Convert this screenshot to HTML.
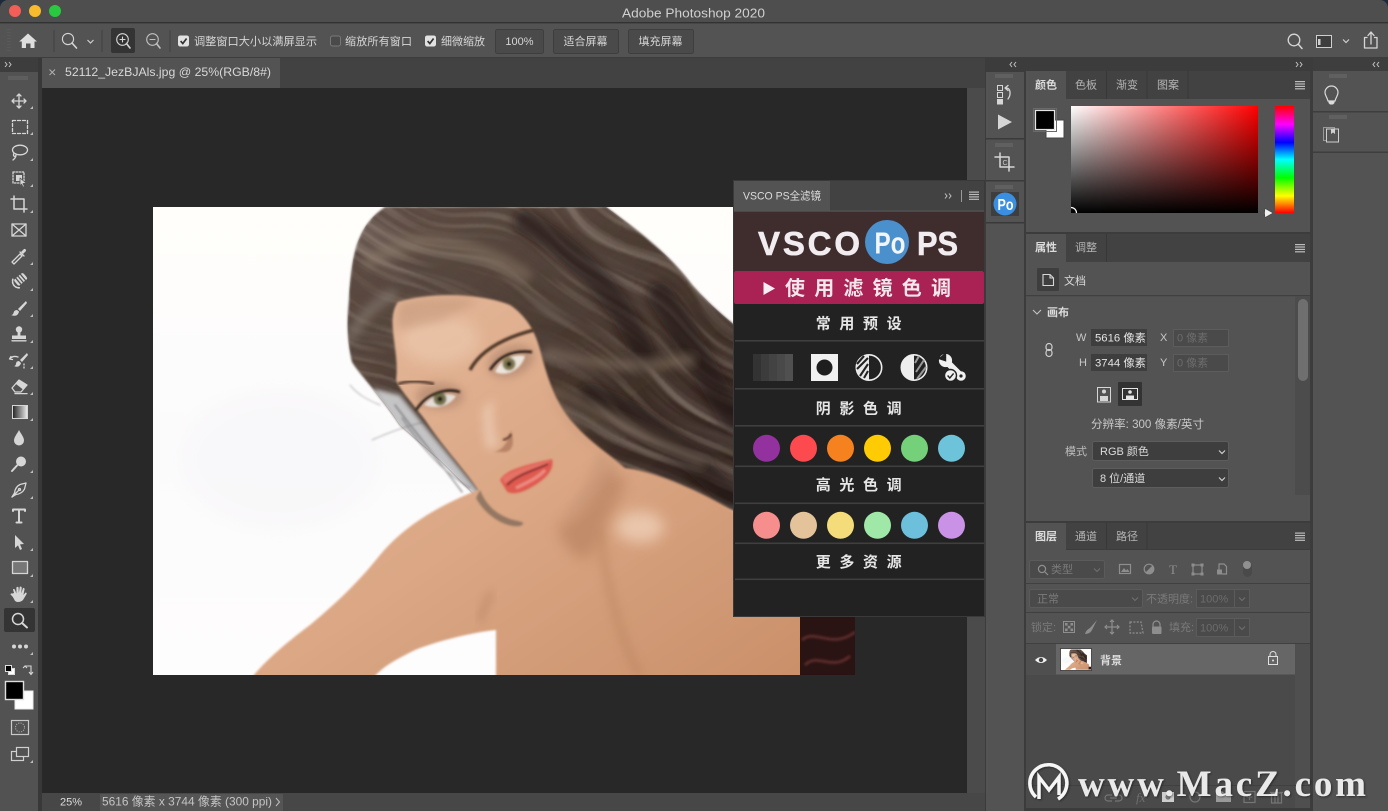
<!DOCTYPE html>
<html lang="zh"><head><meta charset="utf-8"><title>Adobe Photoshop 2020</title>
<style>
html,body{margin:0;padding:0;background:#2b2b2b;width:1388px;height:811px;overflow:hidden}
#w{position:relative;width:1388px;height:811px;overflow:hidden}
svg{display:block;position:absolute;left:0;top:0;overflow:hidden}
text{font-family:"Liberation Sans","Noto Sans CJK SC",sans-serif;fill:#d6d6d6;font-size:11px}
.t{fill:#dcdcdc}.d{fill:#b4b4b4}.dim{fill:#7a7a7a}.dd{fill:#6c6c6c}
.i{fill:none;stroke:#d6d6d6;stroke-width:1.3;stroke-linecap:round;stroke-linejoin:round}
.f{fill:#d6d6d6;stroke:none}
.g{fill:none;stroke:#8e8e8e;stroke-width:1.2}
.gf{fill:#8e8e8e}
.vl{fill:#e6e6e6;font-size:15px;font-weight:700;letter-spacing:8.6px;text-anchor:middle}
</style></head><body><div id="w">
<svg width="1388" height="811" viewBox="0 0 1388 811" xmlns="http://www.w3.org/2000/svg">
<defs>
<linearGradient id="hg" x1="0" y1="0" x2="1" y2="0"><stop offset="0" stop-color="#fff"/><stop offset="1" stop-color="#f00"/></linearGradient>
<linearGradient id="vg" x1="0" y1="0" x2="0" y2="1"><stop offset="0" stop-color="#000" stop-opacity="0"/><stop offset="1" stop-color="#000"/></linearGradient>
<linearGradient id="hue" x1="0" y1="0" x2="0" y2="1"><stop offset="0" stop-color="#f00"/><stop offset=".17" stop-color="#f0f"/><stop offset=".34" stop-color="#00f"/><stop offset=".5" stop-color="#0ff"/><stop offset=".67" stop-color="#0f0"/><stop offset=".84" stop-color="#ff0"/><stop offset="1" stop-color="#f00"/></linearGradient>
<linearGradient id="gr" x1="0" y1="0" x2="1" y2="0"><stop offset="0" stop-color="#222"/><stop offset="1" stop-color="#eee"/></linearGradient>
<linearGradient id="bg1" x1="0" y1="0" x2="0" y2="1"><stop offset="0" stop-color="#fffefb"/><stop offset=".5" stop-color="#fcfbfc"/><stop offset="1" stop-color="#fefdfd"/></linearGradient>
<linearGradient id="skin" x1="0" y1="0" x2="1" y2="1"><stop offset="0" stop-color="#e6bb9e"/><stop offset=".5" stop-color="#dba785"/><stop offset="1" stop-color="#c98f69"/></linearGradient>
<linearGradient id="hair" x1="0" y1="0" x2="1" y2="1"><stop offset="0" stop-color="#64534a"/><stop offset=".45" stop-color="#4a3a30"/><stop offset="1" stop-color="#2a1d19"/></linearGradient>
<filter id="b1" x="-20%" y="-20%" width="140%" height="140%"><feGaussianBlur stdDeviation="1"/></filter>
<filter id="b2" x="-30%" y="-30%" width="160%" height="160%"><feGaussianBlur stdDeviation="2.5"/></filter>
<filter id="b4" x="-40%" y="-40%" width="180%" height="180%"><feGaussianBlur stdDeviation="4.5"/></filter>
<filter id="b6" x="-50%" y="-50%" width="200%" height="200%"><feGaussianBlur stdDeviation="7"/></filter>
<filter id="strD" x="0" y="0" width="100%" height="100%"><feTurbulence type="fractalNoise" baseFrequency="0.006 0.07" numOctaves="3" seed="4" result="n"/><feColorMatrix in="n" values="0 0 0 0 .09  0 0 0 0 .06  0 0 0 0 .05  2.4 0 0 0 -.9" result="c"/><feTurbulence type="fractalNoise" baseFrequency="0.008" numOctaves="1" seed="7" result="w"/><feDisplacementMap in="c" in2="w" scale="90" xChannelSelector="R" yChannelSelector="G"/><feGaussianBlur stdDeviation=".8"/></filter>
<filter id="strL" x="0" y="0" width="100%" height="100%"><feTurbulence type="fractalNoise" baseFrequency="0.005 0.09" numOctaves="3" seed="11" result="n"/><feColorMatrix in="n" values="0 0 0 0 .58  0 0 0 0 .5  0 0 0 0 .42  2.4 0 0 0 -1.1" result="c"/><feTurbulence type="fractalNoise" baseFrequency="0.008" numOctaves="1" seed="7" result="w"/><feDisplacementMap in="c" in2="w" scale="90" xChannelSelector="R" yChannelSelector="G"/><feGaussianBlur stdDeviation=".8"/></filter>
<filter id="ws" x="-5%" y="-20%" width="110%" height="150%"><feDropShadow dx="1" dy="1" stdDeviation="1" flood-color="#000" flood-opacity=".45"/></filter>
<clipPath id="pc"><rect x="153" y="207" width="702" height="468"/></clipPath>
<clipPath id="hc"><path d="M385,207 L606,207 C640,232 670,255 692,285 C712,308 740,330 760,345 L760,520 L640,480 L600,500 L480,500 L440,460 L400,425 C380,395 360,375 352,362 C347,340 347,320 349,300 C350,280 352,262 356,248 C362,228 372,216 385,207 Z"/></clipPath>
<clipPath id="fieldc"><rect x="1071" y="106" width="187" height="107"/></clipPath>
<g id="menu"><rect x="-5" y="-4" width="10" height="1.2" fill="#bdbdbd"/><rect x="-5" y="-1.6" width="10" height="1.2" fill="#bdbdbd"/><rect x="-5" y=".8" width="10" height="1.2" fill="#bdbdbd"/><rect x="-5" y="3.2" width="10" height="1.2" fill="#bdbdbd"/></g>
<g id="cvl"><path d="M2,-2.5 L0,0 L2,2.5 M6,-2.5 L4,0 L6,2.5" fill="none" stroke="#c2c2c2" stroke-width="1"/></g>
<g id="cvr"><path d="M0,-2.5 L2,0 L0,2.5 M4,-2.5 L6,0 L4,2.5" fill="none" stroke="#c2c2c2" stroke-width="1"/></g>
<g id="chk"><rect x="0" y="0" width="11" height="11" rx="2.2" fill="#e2e2e2"/><path d="M2.6,5.6 L4.8,8 L8.6,3" fill="none" stroke="#333" stroke-width="1.7"/></g>
<g id="sel"><path d="M-3,-1.5 L0,1.5 L3,-1.5" fill="none" stroke="#cfcfcf" stroke-width="1.2"/></g>
<g id="selg"><path d="M-3,-1.5 L0,1.5 L3,-1.5" fill="none" stroke="#6f6f6f" stroke-width="1.1"/></g>
<g id="grip"><path d="M-8,0 V4 M-6,0 V4 M-4,0 V4 M-2,0 V4 M0,0 V4 M2,0 V4 M4,0 V4 M6,0 V4 M8,0 V4" stroke="#6c6c6c" stroke-width="1"/></g>
<g id="photo">
  <rect x="153" y="207" width="702" height="468" fill="url(#bg1)"/>
  <ellipse cx="280" cy="460" rx="100" ry="70" fill="#eeecf2" opacity=".22" filter="url(#b6)"/>
  <!-- hair mass -->
  <path d="M385,207 L606,207 C640,232 670,255 692,285 C712,308 740,330 760,345 L760,520 L640,480 L600,500 L480,500 L440,460 L400,425 C380,395 360,375 352,362 C347,340 347,320 349,300 C350,280 352,262 356,248 C362,228 372,216 385,207 Z" fill="url(#hair)" filter="url(#b1)"/>
  <g clip-path="url(#hc)">
    <rect x="300" y="150" width="560" height="450" transform="rotate(28 580 375)" filter="url(#strD)" opacity=".85"/>
    <rect x="300" y="150" width="560" height="450" transform="rotate(30 580 375)" filter="url(#strL)" opacity=".38"/>
    <g fill="none" stroke-linecap="round" filter="url(#b4)">
      <path d="M525,222 C575,250 625,300 645,360" stroke="#1d1210" stroke-width="24" opacity=".6"/>
      <path d="M660,295 C690,340 715,390 735,420" stroke="#1f1512" stroke-width="26" opacity=".6"/>
      <path d="M590,395 C640,410 680,450 730,495" stroke="#221612" stroke-width="24" opacity=".55"/>
      <path d="M370,262 C410,232 470,238 525,275" stroke="#8b7a68" stroke-width="14" opacity=".5"/>
      <path d="M548,352 C590,362 625,372 690,360" stroke="#8e7c6b" stroke-width="9" opacity=".55"/>
      <path d="M555,390 C590,410 650,435 700,462" stroke="#8a7565" stroke-width="9" opacity=".45"/>
      <path d="M352,335 C362,318 372,305 392,295" stroke="#8c8076" stroke-width="11" opacity=".55"/>
    </g>
    <!-- pale, see-through wisps beside the face -->
    <path d="M372,388 L400,395 L430,432 L482,495 L465,500 L440,470 L400,430 Z" fill="#e6eaef" opacity=".78" filter="url(#b2)"/>
  </g>
  <g fill="none" stroke="#5d5a5c" stroke-linecap="round" filter="url(#b1)" opacity=".6">
    <path d="M395,405 C412,428 440,462 462,492" stroke-width="1.6"/>
    <path d="M402,418 C420,445 440,470 470,488" stroke-width="1.2"/>
    <path d="M372,440 C390,432 410,425 425,422" stroke-width=".7"/>
    <path d="M380,405 C368,400 358,395 350,385" stroke-width=".7"/>
  </g>
  <!-- skin -->
  <path d="M398,302 C430,292 480,293 510,305 C525,315 535,330 540,350 C548,380 556,405 575,425 C590,442 610,455 625,468 C650,470 700,490 740,515 L810,560 L810,680 L496,680 L496,630 C475,632 440,640 415,650 C395,660 380,668 372,680 L250,680 C265,660 290,640 310,625 C340,600 360,580 380,555 C405,525 440,505 478,490 C465,470 445,450 425,420 C410,400 400,390 396,380 C400,350 385,320 398,302 Z" fill="url(#skin)" filter="url(#b1)"/>
  <rect x="800" y="610" width="55" height="65" fill="#2a1413"/>
  <path d="M802,640 C815,628 832,650 855,632 M805,665 C818,652 832,672 850,656" stroke="#5a2a2a" stroke-width="3" fill="none" filter="url(#b1)"/>
  <path d="M480,490 C486,505 496,514 510,519 C520,522 528,522 520,526 C505,528 485,515 476,498 Z" fill="#7b6757" opacity=".75" filter="url(#b1)"/>
  <!-- shading -->
  <g>
    <path d="M606,470 C595,495 575,520 556,528 C566,550 580,565 592,555 C602,530 616,505 628,480 Z" fill="#a8704f" opacity=".45" filter="url(#b6)"/>
    <path d="M545,375 C552,405 565,430 598,452 C588,480 570,510 555,523 C580,510 604,490 620,465 C590,445 562,415 545,375Z" fill="#b98a6e" opacity=".3" filter="url(#b4)"/>
    <path d="M492,592 C484,605 482,615 480,622" stroke="#ad7b5b" stroke-width="6" fill="none" opacity=".5" filter="url(#b4)"/>
    <path d="M600,530 C605,580 620,640 640,675" stroke="#b8835f" stroke-width="10" fill="none" opacity=".4" filter="url(#b4)"/>
    <ellipse cx="640" cy="527" rx="24" ry="16" fill="#f1d3bc" opacity=".75" filter="url(#b6)"/>
    <ellipse cx="440" cy="340" rx="40" ry="25" fill="#efcfb6" opacity=".5" filter="url(#b6)"/>
    <path d="M482,410 C484,428 482,440 488,450 L499,447 C494,430 492,412 494,398 Z" fill="#f2d7c3" opacity=".55" filter="url(#b4)"/>
    <path d="M492,452 C500,452 508,445 511,430 C515,445 512,450 506,452" fill="#a97358" opacity=".7" filter="url(#b1)"/>
    <path d="M503,440 C507,439 510,437 511,434" stroke="#5c3a2a" stroke-width="2" fill="none" filter="url(#b1)"/>
    <path d="M398,302 C420,298 450,295 480,300 L440,322 L398,330 Z" fill="#b78c70" opacity=".4" filter="url(#b4)"/>
    <ellipse cx="440" cy="396" rx="24" ry="13" fill="#9d7460" opacity=".5" filter="url(#b4)"/>
    <ellipse cx="511" cy="361" rx="24" ry="15" fill="#9d7460" opacity=".5" filter="url(#b4)" transform="rotate(-20 511 361)"/>
  </g>
  <path d="M398,384 C410,380 422,381 434,384" stroke="#5c4335" stroke-width="3" fill="none" filter="url(#b1)"/>
  <path d="M470,370 C478,355 495,340 534,330" stroke="#4d3528" stroke-width="3.4" fill="none" filter="url(#b1)"/>
  <g filter="url(#b1)">
    <path d="M424,405 C432,394 448,392 456,396 C450,406 436,410 424,405 Z" fill="#e4ddd5"/>
    <circle cx="440" cy="399" r="6.5" fill="#77734e"/><circle cx="440" cy="399" r="2.6" fill="#1c1512"/>
    <path d="M416,410 C428,392 448,388 460,392" stroke="#1d1411" stroke-width="2.4" fill="none"/>
    <path d="M495,372 C500,358 515,354 525,356 C522,368 508,378 495,372 Z" fill="#ece4dc"/>
    <circle cx="509" cy="364" r="6.5" fill="#80794f"/><circle cx="509" cy="364" r="2.6" fill="#1c1512"/>
    <path d="M490,370 C500,355 515,350 532,352" stroke="#1d1411" stroke-width="2.4" fill="none"/>
  </g>
  <g filter="url(#b1)">
    <path d="M500,480 C505,470 525,465 552,459 C555,470 545,480 530,488 C520,494 508,495 506,490 Z" fill="#df5a4f"/>
    <path d="M502,478 C515,468 535,465 551,460 C545,468 525,470 505,484 Z" fill="#e67165"/>
    <path d="M507,485 C518,474 535,470 548,464" stroke="#7a2426" stroke-width="2" fill="none"/>
    <path d="M516,488 C528,482 538,478 545,470" stroke="#f29a90" stroke-width="3" fill="none" opacity=".8"/>
  </g>
</g>
</defs>

<rect width="1388" height="811" fill="#535353"/>
<rect width="1388" height="22" fill="#4e4e4e"/>
<path d="M0,0H8A8,8 0 0 0 0,8Z M1388,0H1380A8,8 0 0 1 1388,8Z" fill="#1c2a3c"/>
<rect y="22" width="1388" height="1.4" fill="#323232"/>
<circle cx="15" cy="11" r="6" fill="#f35e57"/><circle cx="35" cy="11" r="6" fill="#f8bb2d"/><circle cx="55" cy="11" r="6" fill="#29c940"/>
<text x="622" y="17.5" textLength="143" lengthAdjust="spacingAndGlyphs" style="font-size:13px;fill:#d0d0d0">Adobe Photoshop 2020</text>

<rect y="23.5" width="1388" height="34" fill="#535353"/>
<rect y="57" width="1388" height="1" fill="#3d3d3d"/>
<g stroke="#6a6a6a" stroke-width="1"><path d="M8,29V52M10,29V52" stroke="#5f5f5f" stroke-dasharray="1 2"/></g>
<path d="M28,33.5 L37,41.5 L34.5,41.5 L34.5,48 L30.5,48 L30.5,43.5 L26,43.5 L26,48 L21.8,48 L21.8,41.5 L19.2,41.5 Z" fill="#dedede"/>
<path d="M54,30V52M102,30V52M170,30V52" stroke="#404040" stroke-width="1"/>
<g class="i" style="stroke-width:1.1"><circle cx="68" cy="39" r="5.6"/><path d="M72,43 L76.5,48" stroke-width="1.6"/></g>
<use href="#sel" x="90.5" y="41.5"/>
<rect x="111" y="28" width="24" height="25" rx="2" fill="#343434"/>
<g class="i" style="stroke-width:1.1"><circle cx="122.5" cy="39.5" r="5.8"/><path d="M126.5,43.5 L130,48" stroke-width="1.6"/><path d="M120,39.5H125M122.5,37V42"/></g>
<g class="i" style="stroke-width:1.1;stroke:#c0c0c0"><circle cx="152.5" cy="39.5" r="5.8"/><path d="M156.5,43.5 L160,48" stroke-width="1.6"/><path d="M150,39.5H155"/></g>
<use href="#chk" x="178" y="35.5"/>
<text x="194" y="45" textLength="123" lengthAdjust="spacingAndGlyphs">调整窗口大小以满屏显示</text>
<rect x="330.5" y="36" width="10" height="10" rx="2" fill="#4a4a4a" stroke="#787878"/>
<text x="345" y="45" textLength="67">缩放所有窗口</text>
<use href="#chk" x="425" y="35.5"/>
<text x="441" y="45" textLength="44">细微缩放</text>
<g fill="#4a4a4a" stroke="#3e3e3e"><rect x="495.5" y="29.5" width="48" height="24" rx="2"/><rect x="553.5" y="29.5" width="65" height="24" rx="2"/><rect x="628.5" y="29.5" width="65" height="24" rx="2"/></g>
<text x="519.5" y="45" text-anchor="middle">100%</text>
<text x="585.5" y="45" text-anchor="middle">适合屏幕</text>
<text x="660.5" y="45" text-anchor="middle">填充屏幕</text>
<g class="i"><circle cx="1294" cy="40" r="5.8"/><path d="M1298.4,44.4 L1302,48.5" stroke-width="1.5"/></g>
<rect x="1316.5" y="35.5" width="15" height="12" fill="#3e3e3e" stroke="#cfcfcf"/><rect x="1318" y="39" width="2.5" height="6" fill="#cfcfcf"/>
<use href="#sel" x="1346" y="41"/>
<g class="i"><path d="M1367,37.5H1364.5V48H1377V37.5H1374.5M1371,44V32.5M1368,35.5L1371,32L1374,35.5"/></g>

<rect x="0" y="58" width="38" height="14" fill="#3d3d3d"/>
<use href="#cvr" x="5" y="64.5"/>
<rect x="38" y="58" width="4" height="753" fill="#383838"/>
<rect x="42" y="58" width="943" height="30" fill="#424242"/>
<rect x="42" y="58" width="238" height="30" fill="#535353"/>
<path d="M49.5,69.5 L55,75 M55,69.5 L49.5,75" stroke="#b0b0b0" stroke-width="1"/>
<text x="65" y="76" textLength="206" lengthAdjust="spacingAndGlyphs" style="font-size:12px;fill:#d8d8d8">52112_JezBJAls.jpg @ 25%(RGB/8#)</text>
<rect x="42" y="88" width="925" height="705" fill="#282828"/>
<rect x="967" y="88" width="18" height="705" fill="#4b4b4b"/>
<rect x="42" y="793" width="943" height="18" fill="#474747"/>
<rect x="100" y="794" width="183" height="17" fill="#555"/>
<text x="60" y="805.5" style="font-size:11px;fill:#dcdcdc">25%</text>
<text x="102" y="805.5" textLength="170" lengthAdjust="spacingAndGlyphs" style="font-size:12px;fill:#c4c4c4">5616 像素 x 3744 像素 (300 ppi)</text>
<path d="M276,798 L279.5,802 L276,806" fill="none" stroke="#c0c0c0"/>

<g clip-path="url(#pc)"><use href="#photo"/></g>

<rect x="0" y="72" width="38" height="739" fill="#525252"/>
<path d="M9,76V80M11,76V80M13,76V80M15,76V80M17,76V80M19,76V80M21,76V80M23,76V80M25,76V80M27,76V80" stroke="#6b6b6b"/>
<g class="i">
 <g transform="translate(19,101)"><path d="M0,-7V7M-7,0H7M-2,-5L0,-7L2,-5M-2,5L0,7L2,5M-5,-2L-7,0L-5,2M5,-2L7,0L5,2"/></g>
 <rect x="12.5" y="120.5" width="15" height="13" stroke-dasharray="3 2"/>
 <g transform="translate(19,152)"><ellipse cx="1" cy="-2" rx="7.5" ry="4.8"/><path d="M-5,1 C-7,5 -3,5 -3,3 C-3,6 -5,7 -6,8"/></g>
 <g transform="translate(19,178)"><rect x="-6" y="-6" width="11" height="11" stroke-dasharray="1.5 1.5"/><rect x="-3" y="-3" width="6" height="6" class="f"/><path d="M1,0 L7,5 L4,5.5 L5.5,8.5 L4,9 L2.6,6.2 L1,8Z" class="f" style="stroke:#525252;stroke-width:.8"/></g>
 <g transform="translate(19,204)" style="stroke-width:1.5"><path d="M-8,-5H5V8M-5,-8V5H8"/></g>
 <g transform="translate(19,230)"><rect x="-7" y="-6" width="14" height="12"/><path d="M-7,-6L7,6M7,-6L-7,6"/></g>
 <g transform="translate(19,256)"><path d="M-6,7 L-7,6 L1,-2 L3,0 L-5,8Z M2,-3 L4,-1 M1,-4 L5,0"/><path d="M2,-4 L5,-7 Q7,-7.5 7,-5 L4,-2Z" class="f"/></g>
 <g transform="translate(19,282) rotate(-40)"><rect x="-3" y="-5" width="12" height="8" rx="2" class="f"/><path d="M0,-5V3M3,-5V3M6,-5V3" style="stroke:#525252"/><path d="M-3,-6 A8,7 0 0 0 -3,5" stroke-dasharray="1.5 1.2" style="stroke-width:1.6"/></g>
 <g transform="translate(19,308)"><path d="M7,-7 L-1,1 L1,3 L8,-5Z" class="f"/><path d="M-2,2 Q-5,2 -5.5,5 Q-6,7 -8,7 Q-3,9 -1,6 Q0,4.5 0,3.5Z" class="f"/></g>
 <g transform="translate(19,334)"><circle cx="0" cy="-4.5" r="3.2" class="f"/><path d="M-1.4,-2H1.4V1.5H-1.4Z" class="f"/><path d="M-7,1.5H7V5H-7Z" class="f"/><path d="M-7,6.8H7"/></g>
 <g transform="translate(19,360)"><path d="M8,-7 L1,0 L3,2 L9,-5Z" class="f"/><path d="M0,1 Q-3,1 -3,4 Q-3.5,6 -5,6 Q-1,8 1,5 Q2,4 2,3Z" class="f"/><path d="M-9,-1 C-7,-4 -4,-4 -1,-3 M-8,-3.5L-9.5,-1L-6.5,-.5"/><path d="M5,4V5M5,7V8" /></g>
 <g transform="translate(19,386)"><path d="M-7,2 L0,-6 L8,-1 L2,6 L-4,6Z"/><path d="M0,-6 L8,-1 L4,3.5 L-3,-2Z" class="f"/><path d="M-4,7.6H8"/></g>
</g>
<rect x="12.5" y="405.5" width="15" height="13" fill="url(#gr)" stroke="#d6d6d6"/>
<g class="i">
 <g transform="translate(19,438)"><path d="M0,-8 C-2,-4 -5,-1 -5,2.5 A5,5 0 0 0 5,2.5 C5,-1 2,-4 0,-8Z" class="f"/></g>
 <g transform="translate(19,464)"><circle cx="2" cy="-2.5" r="5" class="f"/><path d="M-2,1.5 L-7,7" style="stroke-width:2"/></g>
 <g transform="translate(19,490)"><path d="M7,-7 L1,-5.5 C-2,-4 -4,-1 -4.5,3 L-7,7 L-3,4.5 C1,4 4,2 5.5,-1 Z"/><path d="M-7,7 L0,0"/><circle cx="0.5" cy="-.5" r="1"/></g>
 <g transform="translate(19,516)" style="stroke-width:2"><path d="M-6,-5V-6.5H6V-5M0,-6.5V6.5M-2.5,6.5H2.5"/></g>
 <g transform="translate(19,542)"><path d="M-4,-7 L5,2 L1,2.4 L3,7 L1,8 L-1,3.4 L-4,6Z" class="f"/></g>
 <rect x="12.5" y="561.5" width="15" height="12" fill="#777"/>
 <g transform="translate(19,594)"><path d="M-5,-1 L-6,-4.5 Q-5,-6 -4,-4 L-2.6,-.5 L-2.6,-6.5 Q-1.4,-8 -.4,-6.5 L-.2,-1 L.8,-7.2 Q2,-8 2.8,-6.5 L2.2,-.5 L4,-6 Q5.2,-6.5 5.6,-5 L4.4,1 L6.5,-1.5 Q8,-1.5 7.6,0 L4,6 Q2,8 -1,8 Q-4,8 -5,5 Q-6.5,2 -8.5,.5 Q-8.5,-1 -6.5,-.5Z" class="f"/></g>
</g>
<rect x="4" y="608" width="31" height="24" rx="2" fill="#343434"/>
<g class="i" style="stroke-width:1.5"><circle cx="18" cy="619" r="5.5"/><path d="M22,623 L27,627.5" style="stroke-width:2"/></g>
<g class="f"><circle cx="14" cy="646.5" r="2"/><circle cx="20" cy="646.5" r="2"/><circle cx="26" cy="646.5" r="2"/></g>
<g fill="#bdbdbd"><path d="M33,106l-3,3h3zM33,132l-3,3h3zM33,158l-3,3h3zM33,184l-3,3h3zM33,210l-3,3h3zM33,262l-3,3h3zM33,288l-3,3h3zM33,314l-3,3h3zM33,340l-3,3h3zM33,366l-3,3h3zM33,392l-3,3h3zM33,418l-3,3h3zM33,470l-3,3h3zM33,496l-3,3h3zM33,548l-3,3h3zM33,574l-3,3h3zM33,600l-3,3h3zM33,652l-3,3h3zM33,760l-3,3h3z"/></g>
<rect x="8.5" y="668.5" width="6" height="6" fill="#fff" stroke="#ddd"/><rect x="5.5" y="665.5" width="6" height="6" fill="#000" stroke="#ddd"/>
<path d="M23,668 L25,666 L27,668 M25,666 H31 V674 M29,672 L31,674.5 L33,672" fill="none" stroke="#d6d6d6" stroke-width="1.1"/>
<rect x="15" y="691" width="18" height="18" fill="#fff" stroke="#e8e8e8"/>
<rect x="5.5" y="681.5" width="18" height="18" fill="#000" stroke="#dedede" stroke-width="1.4"/>
<rect x="11.5" y="720.5" width="17" height="14" fill="none" stroke="#c9c9c9" stroke-width="1.2"/>
<circle cx="20" cy="727.5" r="4.5" fill="none" stroke="#a9a9a9" stroke-dasharray="1.2 1.2"/>
<g fill="#525252" stroke="#d0d0d0" stroke-width="1.2"><rect x="11.5" y="751.5" width="12" height="9"/><rect x="16.5" y="747.5" width="12" height="9"/></g>

<rect x="985" y="58" width="40" height="753" fill="#3c3c3c"/>
<use href="#cvl" x="1010" y="64.5"/>
<rect x="986" y="72" width="38" height="739" fill="#535353"/>
<rect x="986" y="138" width="38" height="1.5" fill="#3a3a3a"/>
<rect x="986" y="180" width="38" height="1.5" fill="#3a3a3a"/>
<rect x="986" y="222" width="38" height="1.5" fill="#3a3a3a"/>
<use href="#grip" x="1004" y="74"/><use href="#grip" x="1004" y="143"/><use href="#grip" x="1004" y="185"/>
<g fill="none" stroke="#d6d6d6"><rect x="997.5" y="85.5" width="5" height="5"/><rect x="997.5" y="92.5" width="5" height="5"/></g>
<rect x="997" y="99" width="6" height="5.5" fill="#d6d6d6"/>
<path d="M1006,88 C1011,88 1011,95 1008,99 M1005,88L1008,85.5M1005,88L1008,90.5" class="i"/>
<path d="M998,114.5 L1012,122 L998,129.5Z" fill="#d6d6d6"/>
<g class="i" style="stroke-width:1.5"><path d="M995,157H1009V171M1000,153V167H1014"/></g>
<text x="1002.5" y="165" style="font-size:7px;fill:#ccc">C</text>
<rect x="991" y="192" width="28" height="24" fill="#3e3e3e"/>
<circle cx="1005" cy="204" r="11.5" fill="#3a8fe0"/>
<text x="997.5" y="210" textLength="16" lengthAdjust="spacingAndGlyphs" style="font-size:16px;font-weight:700;fill:#fff">Po</text>

<rect x="733" y="180" width="252" height="437" fill="#222"/>
<rect x="733" y="180" width="252" height="31" fill="#424242"/>
<rect x="733" y="180" width="97" height="31" fill="#535353"/>
<rect x="733" y="210.5" width="252" height="1.3" fill="#555"/>
<text x="743" y="199.5" textLength="78" lengthAdjust="spacingAndGlyphs" style="font-size:11px;fill:#dcdcdc">VSCO PS全滤镜</text>
<use href="#cvr" x="945" y="196"/>
<path d="M961.5,190V202" stroke="#9a9a9a"/>
<use href="#menu" x="974" y="195.5"/>
<rect x="733.5" y="212" width="251" height="59" fill="#3f2d2e"/>
<text x="758" y="255" textLength="102" lengthAdjust="spacing" style="font-size:33px;font-weight:700;fill:#f1ecef;stroke:#f1ecef;stroke-width:.6">VSCO</text>
<text x="917" y="255" textLength="41" lengthAdjust="spacingAndGlyphs" style="font-size:33px;font-weight:700;fill:#f1ecef;stroke:#f1ecef;stroke-width:.6">PS</text>
<circle cx="887" cy="242" r="22" fill="#4a90cc"/>
<text x="874.5" y="253.5" textLength="31" lengthAdjust="spacingAndGlyphs" style="font-size:31px;font-weight:700;fill:#f2f6fa">Po</text>
<rect x="734" y="271" width="250" height="33" rx="2" fill="#a92253"/>
<path d="M763.5,282 L775,288.5 L763.5,295Z" fill="#f6eef2"/>
<text x="785" y="295" style="font-size:20px;font-weight:700;letter-spacing:9.2px;fill:#f3e7ec;font-family:'Noto Sans CJK SC','WenQuanYi Zen Hei',sans-serif">使用滤镜色调</text>
<g fill="#3f3f3f"><rect x="735" y="340" width="249" height="1.6"/><rect x="735" y="388" width="249" height="1.6"/><rect x="735" y="425" width="249" height="1.6"/><rect x="735" y="465.5" width="249" height="1.6"/><rect x="735" y="502.5" width="249" height="1.6"/><rect x="735" y="542.5" width="249" height="1.6"/><rect x="735" y="578.5" width="249" height="1.6"/></g>
<text class="vl" x="863" y="328.5">常用预设</text>
<text class="vl" x="863" y="413.5">阴影色调</text>
<text class="vl" x="863" y="490">高光色调</text>
<text class="vl" x="863" y="567">更多资源</text>
<g><rect x="753" y="354" width="8" height="27" fill="#333"/><rect x="761" y="354" width="8" height="27" fill="#3c3c3c"/><rect x="769" y="354" width="8" height="27" fill="#434343"/><rect x="777" y="354" width="8" height="27" fill="#494949"/><rect x="785" y="354" width="8" height="27" fill="#505050"/></g>
<rect x="811" y="354" width="27" height="27" fill="#f0f0f0"/><circle cx="824.5" cy="367.5" r="8" fill="#1e1e1e"/>
<circle cx="869" cy="367.5" r="12.7" fill="#222" stroke="#eee" stroke-width="1.6"/>
<path d="M869,355 A12.5,12.5 0 0 0 869,380Z" fill="#e8e8e8"/>
<path d="M868,358 L857,369 M868,364 L860,376 M868,371 L864,378 M864,356 L857,364" stroke="#222" stroke-width="2.1"/>
<circle cx="914" cy="367.5" r="12.7" fill="#222" stroke="#eee" stroke-width="1.6"/>
<path d="M914,355 A12.5,12.5 0 0 0 914,380Z" fill="#eee"/>
<path d="M924,360 L916,372 M926,367 L917,379 M919,356 L915,363" stroke="#9a9a9a" stroke-width="2"/>
<g>
<path d="M946,361 L961,376" stroke="#f0f0f0" stroke-width="6.5"/>
<circle cx="945.5" cy="360.5" r="6.6" fill="#f0f0f0"/>
<path d="M945,353 L945,360 L939,358" fill="#222" stroke="#222" stroke-width="2.4"/>
<circle cx="961" cy="376" r="4.8" fill="#f0f0f0"/><circle cx="961" cy="376" r="1.6" fill="#222"/>
<circle cx="950.5" cy="375.5" r="6" fill="#f0f0f0" stroke="#222" stroke-width="1.4"/>
<path d="M947.6,375.5 L949.8,378 L953.6,373.4" fill="none" stroke="#222" stroke-width="1.4"/>
</g>
<g>
<circle cx="766.5" cy="448.3" r="13.5" fill="#93329e"/><circle cx="803.5" cy="448.3" r="13.5" fill="#fd4a4f"/><circle cx="840.5" cy="448.3" r="13.5" fill="#f5821f"/><circle cx="877.5" cy="448.3" r="13.5" fill="#ffcb05"/><circle cx="914.5" cy="448.3" r="13.5" fill="#75d07a"/><circle cx="951.5" cy="448.3" r="13.5" fill="#6dc3da"/>
<circle cx="766.5" cy="525.3" r="13.5" fill="#f58e8c"/><circle cx="803.5" cy="525.3" r="13.5" fill="#e4c39a"/><circle cx="840.5" cy="525.3" r="13.5" fill="#f4dc7a"/><circle cx="877.5" cy="525.3" r="13.5" fill="#9fe8a8"/><circle cx="914.5" cy="525.3" r="13.5" fill="#6cc0dc"/><circle cx="951.5" cy="525.3" r="13.5" fill="#c992e6"/>
</g>
<rect x="733.5" y="180.5" width="251" height="436" fill="none" stroke="#3a3a3a"/>

<rect x="1025" y="58" width="288" height="753" fill="#3c3c3c"/>
<use href="#cvr" x="1296" y="64.5"/>
<rect x="1026" y="71" width="284" height="28" fill="#424242"/>
<rect x="1026" y="71" width="40" height="28" fill="#535353"/>
<path d="M1106.5,71V99M1147,71V99M1188,71V99" stroke="#383838"/>
<rect x="1026" y="99" width="284" height="133" fill="#535353"/>
<text x="1035" y="88.5" class="t" style="font-size:11px;font-weight:700">颜色</text>
<text x="1075" y="88.5" class="d">色板</text><text x="1116" y="88.5" class="d">渐变</text><text x="1157" y="88.5" class="d">图案</text>
<use href="#menu" x="1300" y="85"/>
<rect x="1046" y="120" width="18" height="18" fill="#fff" stroke="#454545"/>
<rect x="1035.5" y="110.5" width="19" height="19" fill="#000" stroke="#e6e6e6" stroke-width="1.2"/>
<rect x="1033.5" y="108.5" width="23" height="23" fill="none" stroke="#6a6a6a"/>
<rect x="1071" y="106" width="187" height="107" fill="url(#hg)"/>
<rect x="1071" y="106" width="187" height="107" fill="url(#vg)"/>
<g clip-path="url(#fieldc)"><circle cx="1071" cy="213" r="5.5" fill="none" stroke="#fff" stroke-width="1.2"/></g>
<rect x="1275" y="106" width="19" height="107" fill="url(#hue)"/>
<path d="M1265,208.5 L1273,213 L1265,217.5 Q1264,213 1265,208.5Z" fill="#f0f0f0" stroke="#333" stroke-width=".5"/>
<rect x="1026" y="234" width="284" height="28" fill="#424242"/>
<rect x="1026" y="234" width="40" height="28" fill="#535353"/>
<path d="M1106.5,234V262" stroke="#383838"/>
<rect x="1026" y="262" width="284" height="259" fill="#535353"/>
<text x="1035" y="251" class="t" style="font-size:11px;font-weight:700">属性</text><text x="1075" y="251" class="d">调整</text>
<use href="#menu" x="1300" y="248"/>
<rect x="1037" y="268" width="22" height="23" rx="1.5" fill="#3e3e3e"/>
<path d="M1043,274.5H1050L1053.5,278V285.5H1043Z M1050,274.5V278H1053.5" fill="none" stroke="#d6d6d6" stroke-width="1.1"/>
<text x="1064" y="284.5" class="t">文档</text>
<rect x="1026" y="295" width="284" height="1.2" fill="#404040"/>
<path d="M1033,310 L1037,314 L1041,310" fill="none" stroke="#c4c4c4" stroke-width="1.1"/>
<text x="1047" y="316" class="t" style="font-weight:700">画布</text>
<text x="1076" y="341" class="d" style="fill:#c8c8c8">W</text><text x="1079" y="366" style="fill:#c8c8c8">H</text>
<text x="1160" y="341" style="fill:#c8c8c8">X</text><text x="1160" y="366" style="fill:#c8c8c8">Y</text>
<g fill="#3e3e3e"><rect x="1091" y="329" width="56" height="17"/><rect x="1091" y="354" width="56" height="17"/></g>
<g fill="#4a4a4a" stroke="#5c5c5c"><rect x="1173.5" y="329.5" width="55" height="17"/><rect x="1173.5" y="354.5" width="55" height="17"/></g>
<text x="1095" y="341.5" textLength="51" lengthAdjust="spacingAndGlyphs" style="fill:#e4e4e4">5616 像素</text>
<text x="1095" y="366.5" textLength="51" lengthAdjust="spacingAndGlyphs" style="fill:#e4e4e4">3744 像素</text>
<text x="1177" y="341.5" class="dd">0 像素</text><text x="1177" y="366.5" class="dd">0 像素</text>
<g fill="none" stroke="#d0d0d0" stroke-width="1.2"><rect x="1046" y="343.5" width="6" height="7" rx="3"/><rect x="1046" y="349.5" width="6" height="7" rx="3"/></g>
<rect x="1097.5" y="387.5" width="13" height="14.5" fill="none" stroke="#d6d6d6"/><circle cx="1104" cy="391.5" r="2" fill="#d6d6d6"/><path d="M1100,401 V396 H1108 V401Z" fill="#d6d6d6"/>
<rect x="1118" y="382" width="24" height="24" rx="1" fill="#333"/><rect x="1122.5" y="388.5" width="15" height="11" fill="none" stroke="#e6e6e6"/><circle cx="1130" cy="392" r="1.8" fill="#e6e6e6"/><path d="M1126,399 V395.5 H1134 V399Z" fill="#e6e6e6"/>
<text x="1091" y="428" textLength="113" lengthAdjust="spacingAndGlyphs" style="font-size:11.5px;fill:#c8c8c8">分辨率: 300 像素/英寸</text>
<text x="1065" y="455" style="fill:#bdbdbd">模式</text>
<g fill="#3e3e3e" stroke="#5d5d5d"><rect x="1092.5" y="441.5" width="136" height="19" rx="2"/><rect x="1092.5" y="468.5" width="136" height="19" rx="2"/></g>
<text x="1100" y="455" style="fill:#dcdcdc">RGB 颜色</text><text x="1100" y="482" style="fill:#dcdcdc">8 位/通道</text>
<use href="#sel" x="1222" y="452"/><use href="#sel" x="1222" y="479"/>
<rect x="1295" y="296" width="15" height="199" fill="#4c4c4c"/>
<rect x="1298" y="299" width="10" height="82" rx="5" fill="#6f6f6f"/>
<rect x="1026" y="523" width="284" height="26" fill="#424242"/>
<rect x="1026" y="523" width="40" height="27" fill="#535353"/>
<path d="M1106.5,523V549M1147,523V549" stroke="#383838"/>
<rect x="1026" y="550" width="284" height="94" fill="#535353"/>
<text x="1035" y="540" class="t" style="font-weight:700">图层</text><text x="1075" y="540" class="d">通道</text><text x="1116" y="540" class="d">路径</text>
<use href="#menu" x="1300" y="536.5"/>
<rect x="1026" y="583" width="284" height="1" fill="#404040"/><rect x="1026" y="612" width="284" height="1" fill="#404040"/><rect x="1026" y="643" width="284" height="1" fill="#404040"/>
<rect x="1029.5" y="560.5" width="75" height="18" rx="2" fill="#4a4a4a" stroke="#5b5b5b"/>
<g class="g"><circle cx="1042" cy="569" r="3.6"/><path d="M1045,572L1048,575"/></g>
<text x="1051" y="573" class="dim">类型</text><use href="#selg" x="1097" y="570"/>
<g class="g"><rect x="1119.5" y="564.5" width="11" height="9"/><path d="M1121,572 L1124,568 L1126,570.5 L1127.5,569 L1129.5,572Z" fill="#8e8e8e" stroke="none"/>
<circle cx="1149" cy="569" r="4.8"/><path d="M1149,564 A5,5 0 0 1 1149,574Z" fill="#8e8e8e" stroke="none" transform="rotate(45 1149 569)"/></g>
<text x="1173" y="574" text-anchor="middle" style="font-size:13px;fill:#8e8e8e;font-family:'Liberation Serif',serif">T</text>
<g class="g"><rect x="1193" y="565" width="9" height="9"/></g><g class="gf"><rect x="1191.5" y="563.5" width="3" height="3"/><rect x="1200.5" y="563.5" width="3" height="3"/><rect x="1191.5" y="572.5" width="3" height="3"/><rect x="1200.5" y="572.5" width="3" height="3"/></g>
<path d="M1219,570V564H1224L1226.5,566.5V574H1222" class="g"/><rect x="1217" y="569.5" width="5" height="5" fill="#8e8e8e"/>
<rect x="1243" y="562" width="9" height="15" rx="4.5" fill="#4a4a4a"/><circle cx="1247" cy="565" r="4" fill="#909090"/>
<rect x="1029.5" y="589.5" width="113" height="18" rx="2" fill="#4a4a4a" stroke="#5b5b5b"/>
<text x="1037" y="602.5" class="dim">正常</text><use href="#selg" x="1135" y="599"/>
<text x="1146" y="602.5" class="dim">不透明度:</text>
<rect x="1196.5" y="589.5" width="38" height="18" fill="#4a4a4a" stroke="#5b5b5b"/><rect x="1234.5" y="589.5" width="15" height="18" fill="#4a4a4a" stroke="#5b5b5b"/>
<text x="1200" y="602.5" class="dd">100%</text><use href="#selg" x="1242" y="599"/>
<text x="1031" y="631" class="dim">锁定:</text>
<rect x="1063.5" y="621.5" width="11" height="11" fill="none" stroke="#8e8e8e"/><g fill="#8e8e8e"><rect x="1065" y="623" width="2.6" height="2.6"/><rect x="1070.5" y="623" width="2.6" height="2.6"/><rect x="1067.8" y="625.8" width="2.6" height="2.6"/><rect x="1065" y="628.5" width="2.6" height="2.6"/><rect x="1070.5" y="628.5" width="2.6" height="2.6"/></g>
<path d="M1097,620 L1090,628 Q1086,630 1085,634 Q1090,634 1092,630Z" fill="#8e8e8e"/>
<path d="M1112,620V634M1105,627H1119M1110,622L1112,620L1114,622M1110,632L1112,634L1114,632M1107,625L1105,627L1107,629M1117,625L1119,627L1117,629" class="g"/>
<path d="M1130,622H1141L1143,633H1130Z" class="g" stroke-dasharray="2 1.4"/>
<path d="M1153,627V624.5A3.5,3.5 0 0 1 1160,624.5V627" class="g"/><rect x="1152" y="626.5" width="9.5" height="7.5" rx="1" fill="#8e8e8e"/>
<text x="1169" y="631" class="dim">填充:</text>
<rect x="1196.5" y="618.5" width="38" height="18" fill="#4a4a4a" stroke="#5b5b5b"/><rect x="1234.5" y="618.5" width="15" height="18" fill="#4a4a4a" stroke="#5b5b5b"/>
<text x="1200" y="631.5" class="dd">100%</text><use href="#selg" x="1242" y="628"/>
<rect x="1026" y="644" width="269" height="164" fill="#4a4a4a"/>
<rect x="1295" y="644" width="15" height="164" fill="#4f4f4f"/>
<rect x="1026" y="644" width="30" height="31" fill="#4f4f4f"/>
<rect x="1056" y="644" width="239" height="30.5" fill="#666"/>
<path d="M1035,660 Q1041,654 1047,660 Q1041,666 1035,660Z" fill="#f2f2f2"/><circle cx="1041" cy="660" r="2.2" fill="#444"/>
<rect x="1060.5" y="648.5" width="31" height="22" fill="#fff" stroke="#333" stroke-width=".8"/>
<svg x="1061" y="649" width="30" height="21" viewBox="153 207 702 468"><use href="#photo"/></svg>
<text x="1100" y="664" class="t" style="font-weight:700">背景</text>
<path d="M1270,656.5V654.5A3,3 0 0 1 1276,654.5V656.5" fill="none" stroke="#e0e0e0"/><rect x="1268.5" y="656.5" width="9" height="8" fill="none" stroke="#e0e0e0"/><circle cx="1273" cy="660.5" r="1" fill="#e0e0e0"/>
<rect x="1026" y="785" width="284" height="1" fill="#404040"/>
<g class="g" style="stroke:#757575">
 <path d="M1112,795H1108A3,3 0 0 0 1108,801H1112M1115,795H1119A3,3 0 0 1 1119,801H1115M1110,798H1117"/>
 <circle cx="1195" cy="797" r="5"/>
 <rect x="1244" y="791.5" width="11" height="11"/><path d="M1249.5,794V800M1246.5,797H1252.5"/>
 <rect x="1271.5" y="793" width="10" height="10"/><path d="M1270,792.5H1283M1275,793V803M1278,793V803"/>
</g>
<text x="1136" y="802" style="font-size:13px;font-style:italic;fill:#6f6f6f;font-family:'Liberation Serif',serif">fx</text>
<path d="M1162,792H1174V802H1162Z" fill="#e4e4e4" opacity=".85"/><circle cx="1168" cy="797" r="2.6" fill="#777"/>
<path d="M1216,791H1222L1224,793H1231V802H1216Z" fill="#dcdcdc" opacity=".55"/>

<rect x="1313" y="58" width="75" height="753" fill="#3e3e3e"/>
<use href="#cvl" x="1373" y="64.5"/>
<rect x="1313" y="71" width="75" height="40" fill="#535353"/>
<rect x="1313" y="112.5" width="75" height="39" fill="#535353"/>
<rect x="1313" y="153" width="75" height="658" fill="#535353"/>
<use href="#grip" x="1338" y="74"/><use href="#grip" x="1338" y="115"/>
<path d="M1328,101 C1327,97 1325,95.5 1325,92.5 A6.5,6.5 0 0 1 1338,92.5 C1338,95.5 1336,97 1335,101Z" fill="none" stroke="#dcdcdc" stroke-width="1.2"/>
<path d="M1328.5,100.5H1334.5V103L1333,104.5H1330L1328.5,103Z" fill="#dcdcdc"/>
<rect x="1323.5" y="127.5" width="11" height="13" fill="none" stroke="#999"/>
<rect x="1326.5" y="129" width="12" height="13" fill="#535353" stroke="#cfcfcf"/>
<path d="M1331,129V134L1333,132.5L1335,134V129Z" fill="#cfcfcf"/>

<g filter="url(#ws)">
 <path d="M1036,797 A18.5,18.5 0 1 1 1058,799" fill="none" stroke="#f6f6f6" stroke-width="3.5"/>
 <path d="M1039,799 V777 L1049,790 L1059,777 V795" fill="none" stroke="#f6f6f6" stroke-width="3.4"/>
 <text x="1078" y="796" textLength="288" lengthAdjust="spacing" style="font-family:'Liberation Serif',serif;font-weight:700;font-size:37px;fill:#e9e9e9">www.MacZ.com</text>
</g>
</svg>
</div></body></html>
